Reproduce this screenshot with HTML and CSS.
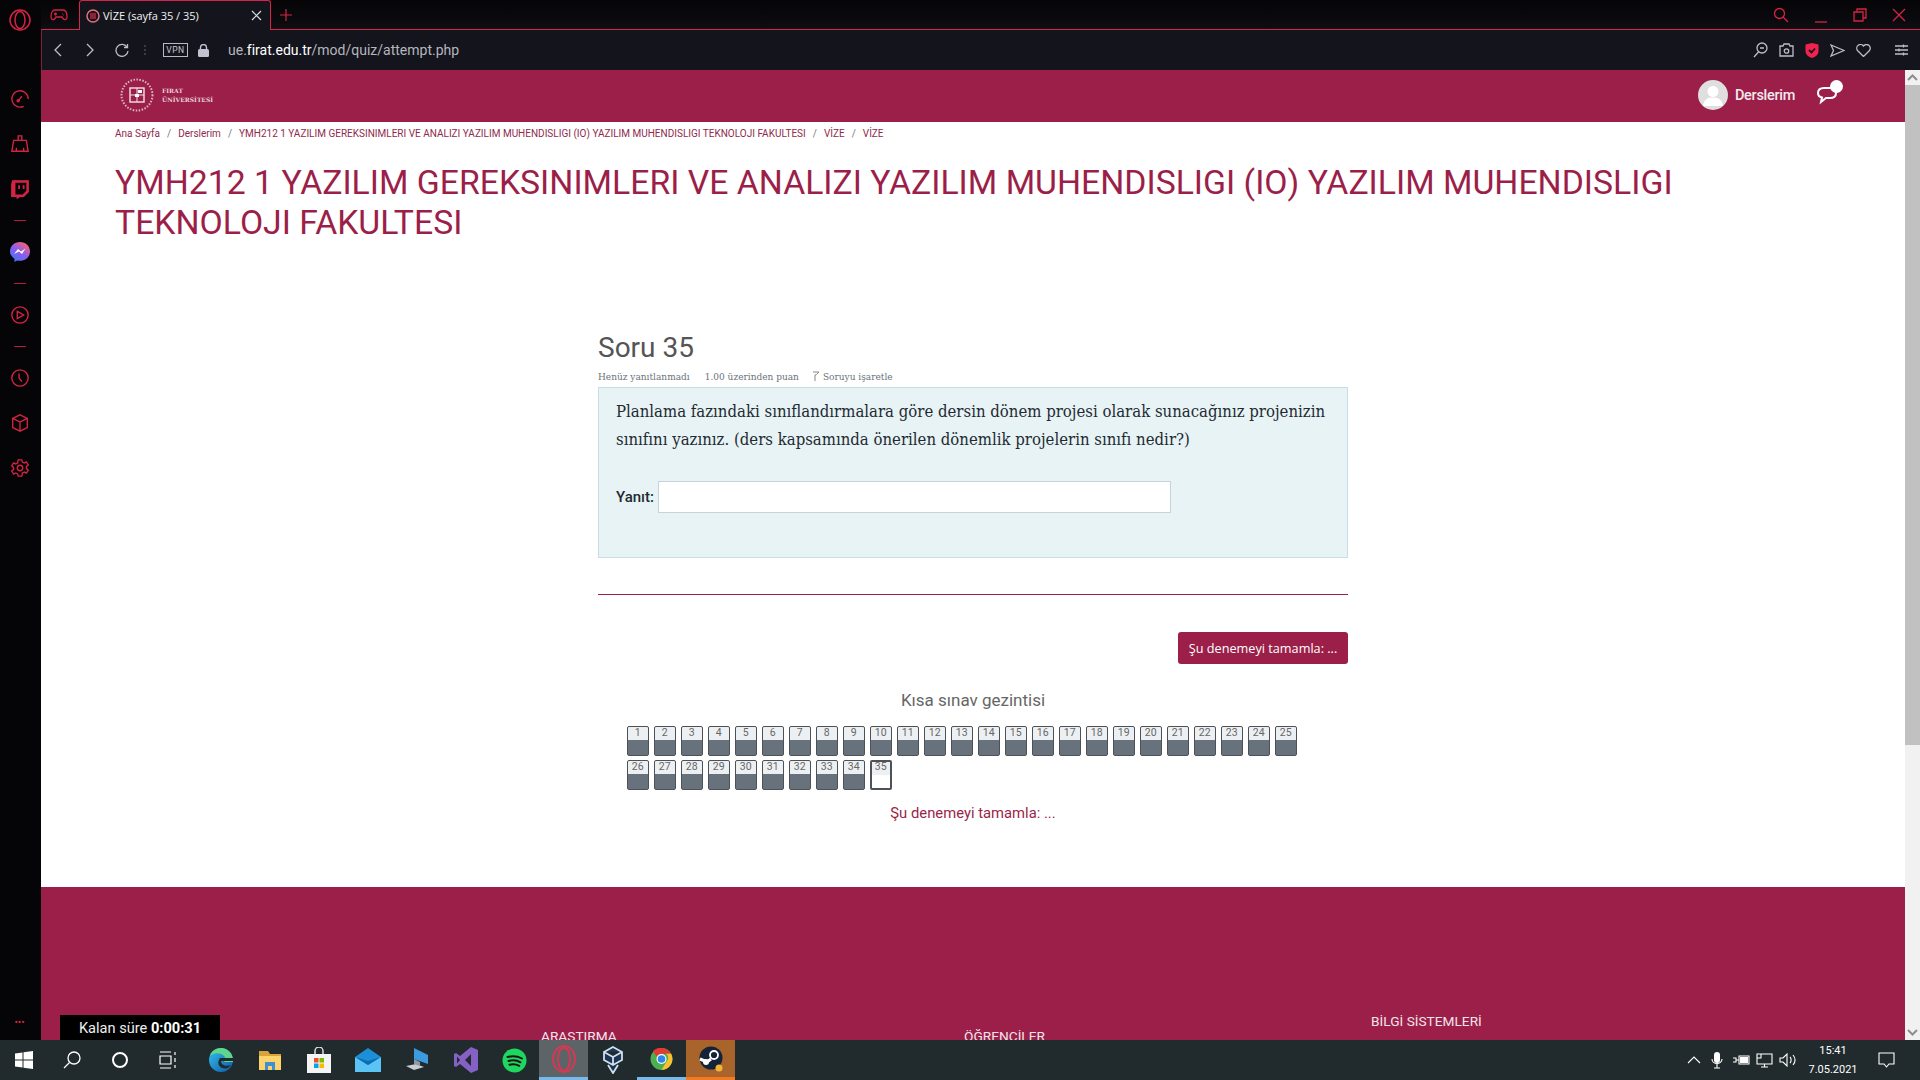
FILE: index.html
```html
<!DOCTYPE html>
<html lang="tr">
<head>
    <meta charset="UTF-8">
    <title>VİZE (sayfa 35 / 35)</title>
    <link rel="stylesheet" href="styles.css">
</head>
<body>
<div class="desktop">
    <div class="browser">
        <!-- Opera yan menu -->
        <aside class="sidebar">
            <svg class="side-logo" width="24" height="24" viewBox="0 0 24 24"><ellipse cx="12" cy="12" rx="10" ry="10"/><ellipse cx="12" cy="12" rx="5" ry="8.5"/></svg>
            <div class="side-icons">
                <svg width="20" height="20" viewBox="0 0 22 22"><path d="M15 19a9 9 0 1 1 5-8"/><path d="M9 13l4-5"/><circle cx="9" cy="13" r="1.2"/></svg>
                <svg class="gap" width="20" height="20" viewBox="0 0 22 22"><path d="M9 7V2h4v5M4 7h14l2 12H2zM7 19v-4M15 19v-4"/></svg>
                <svg class="gap" width="20" height="20" viewBox="0 0 22 22"><path class="solid" d="M3 2h17v12l-5 5h-4l-3 2v-2H2V6z"/><path class="inner" d="M6 4h12v9l-4 4H6z"/><path class="cut" d="M10 7v4M15 7v4"/></svg>
                <span class="side-line"></span>
                <svg class="messenger" width="20" height="20" viewBox="0 0 20 20"><defs><linearGradient id="msg" x1="0" y1="1" x2="0.7" y2="0"><stop offset="0" stop-color="#2f7df6"/><stop offset="0.55" stop-color="#8a5cf0"/><stop offset="1" stop-color="#f2627a"/></linearGradient></defs><path fill="url(#msg)" d="M10 0c5.600 0 10 4 10 9.400s-4.400 9.400-10 9.400c-1 0-2-.1-2.900-.4L4.500 20v-3.300C1.800 15 0 12.400 0 9.400 0 4 4.400 0 10 0z"/><path fill="#fff" d="M4 12l4-5 3 2.400L15.500 6.500 12 12 9 9.500z"/></svg>
                <span class="side-line"></span>
                <svg width="20" height="20" viewBox="0 0 22 22"><circle cx="11" cy="11" r="9"/><path d="M8 7l7 4-7 4z"/></svg>
                <span class="side-line"></span>
                <svg width="20" height="20" viewBox="0 0 22 22"><circle cx="11" cy="11" r="9"/><path d="M10 6v5l3 4"/></svg>
                <svg class="gap" width="20" height="20" viewBox="0 0 22 22"><path d="M11 2l8 4v10l-8 4-8-4V6zM3 6l8 4 8-4M11 10v10"/></svg>
                <svg class="gap" width="20" height="20" viewBox="0 0 22 22"><circle cx="11" cy="11" r="3"/><path d="M9 2h4l.6 2.500 2.200 1 2.300-1.200 2 3.400-2 1.600v2.400l2 1.600-2 3.400-2.300-1.200-2.200 1L13 20H9l-.6-2.500-2.200-1-2.300 1.200-2-3.400 2-1.600V10.300l-2-1.600 2-3.400 2.300 1.200 2.200-1z"/></svg>
            </div>
            <div class="side-more">&bull;&bull;&bull;</div>
        </aside>

        <div class="window">
            <div class="tabstrip">
                <svg class="tab-game" width="18" height="12" viewBox="0 0 18 12"><path d="M5 1h8c2.500 0 4 3 4 7 0 3-2.500 3.500-4 1.500L12 8H6L5 9.500C3.500 11.500 1 11 1 8c0-4 1.500-7 4-7z"/><path d="M4 5h3M5.500 3.500v3M12 4.500h.5M13.500 6h.5"/></svg>
                <div class="tab">
                    <svg width="14" height="14" viewBox="0 0 14 14"><circle cx="7" cy="7" r="6" fill="none" stroke="#e5707e" stroke-width="1.500"/><rect x="4" y="4" width="6" height="6" fill="#8d2238"/></svg>
                    <span class="tab-title">VİZE (sayfa 35 / 35)</span>
                    <svg width="11" height="11" viewBox="0 0 11 11"><path d="M1 1l9 9M10 1l-9 9" stroke="#ddd" stroke-width="1.200"/></svg>
                </div>
                <svg class="tab-plus" width="12" height="12" viewBox="0 0 12 12"><path d="M6 0v12M0 6h12"/></svg>
                <div class="win-buttons">
                    <svg width="16" height="16" viewBox="0 0 16 16"><circle cx="6.500" cy="6.500" r="5"/><path d="M10 10l5 5"/></svg>
                    <svg class="win-min" width="14" height="16" viewBox="0 0 14 16"><path d="M1 15h12"/></svg>
                    <svg width="14" height="14" viewBox="0 0 14 14"><path d="M1 4h9v9H1zM4 4V1h9v9h-3"/></svg>
                    <svg width="14" height="14" viewBox="0 0 14 14"><path d="M1 1l12 12M13 1L1 13"/></svg>
                </div>
            </div>

            <div class="toolbar">
                <svg width="10" height="14" viewBox="0 0 10 14"><path d="M8 1L2 7l6 6"/></svg>
                <svg class="nav-next" width="10" height="14" viewBox="0 0 10 14"><path d="M2 1l6 6-6 6"/></svg>
                <svg class="nav-reload" width="14" height="14" viewBox="0 0 14 14"><path d="M12 4a6 6 0 1 0 1 4M12.500 1v3.500H9"/></svg>
                <span class="tool-dots"></span>
                <span class="vpn">VPN</span>
                <svg class="lock" width="11" height="13" viewBox="0 0 11 13"><rect x="0" y="5" width="11" height="8" rx="1.500" fill="#c3c0d2"/><path d="M2.500 5V3.500a3 3 0 0 1 6 0V5" fill="none" stroke="#c3c0d2" stroke-width="1.400"/></svg>
                <span class="url">ue.<b>firat.edu.tr</b>/mod/quiz/attempt.php</span>
                <div class="tool-right">
                    <svg width="15" height="16" viewBox="0 0 15 16"><circle cx="9" cy="6" r="5"/><path d="M5.500 10L1 15M7 6h4"/></svg>
                    <svg width="15" height="14" viewBox="0 0 15 14"><path d="M1 3h3l1-2h5l1 2h3v10H1z"/><circle cx="7.500" cy="8" r="2.200"/></svg>
                    <svg width="14" height="15" viewBox="0 0 14 15"><path fill="#f0224e" stroke="none" d="M7 0l6.500 1.500V8c0 3.500-3 6-6.500 7-3.500-1-6.500-3.500-6.500-7V1.500z"/><path d="M4 7l2.500 2.500L10 5.500" stroke="#15161e" stroke-width="1.800"/></svg>
                    <svg width="15" height="13" viewBox="0 0 15 13"><path d="M1 1l13 5.500L1 12l2.500-5.500z"/></svg>
                    <svg width="15" height="13" viewBox="0 0 15 13"><path d="M7.500 12.500L1.500 6.500a3.500 3.500 0 0 1 6-4.500 3.500 3.500 0 0 1 6 4.500z"/></svg>
                    <svg class="tool-menu" width="13" height="12" viewBox="0 0 13 12"><path d="M0 2h13M0 6h13M0 10h13M8.500 0.500v3M4 4.500v3M8.500 8.500v3"/></svg>
                </div>
            </div>

            <div class="viewport">
                <div class="page">
                    <header class="navbar">
                        <div class="brand">
                            <svg width="34" height="34" viewBox="0 0 34 34"><circle cx="17" cy="17" r="15.500" fill="none" stroke="#d9b8c5" stroke-width="2" stroke-dasharray="1.500 1.500"/><rect x="10" y="10" width="14" height="14" fill="none" stroke="#f1e3e9" stroke-width="1.400"/><path d="M17 10v14M10 17h14" stroke="#f1e3e9"/><rect x="18" y="12" width="4" height="3" fill="#fff"/><rect x="15" y="16" width="4" height="3" fill="#fff"/></svg>
                            <div class="brand-name">FIRAT<br>ÜNİVERSİTESİ</div>
                        </div>
                        <div class="user-menu">
                            <div class="avatar"><svg width="30" height="30" viewBox="0 0 30 30"><circle cx="15" cy="11.500" r="5.500" fill="#fff"/><path d="M5 26c1-7 5-8.500 10-8.500S24 19 25 26z" fill="#fff"/></svg></div>
                            <span class="user-link">Derslerim</span>
                            <div class="chat">
                                <svg width="24" height="20" viewBox="0 0 24 20"><path d="M8 3h6c4 0 6 2 6 5s-2 5-6 5h-4l-5 4 1-4.500C3 12 2 10 2 8c0-3 2-5 6-5z" fill="none" stroke="#fff" stroke-width="2"/></svg>
                                <span class="chat-dot"></span>
                            </div>
                        </div>
                    </header>

                    <nav class="breadcrumb">
                        <a>Ana Sayfa</a><i>/</i><a>Derslerim</a><i>/</i><a>YMH212 1 YAZILIM GEREKSINIMLERI VE ANALIZI YAZILIM MUHENDISLIGI (IO) YAZILIM MUHENDISLIGI TEKNOLOJI FAKULTESI</a><i>/</i><a>VİZE</a><i>/</i><a>VİZE</a>
                    </nav>

                    <h1 class="course-title">YMH212 1 YAZILIM GEREKSINIMLERI VE ANALIZI YAZILIM MUHENDISLIGI (IO) YAZILIM MUHENDISLIGI TEKNOLOJI FAKULTESI</h1>

                    <main class="quiz">
                        <h2 class="question-no">Soru 35</h2>
                        <div class="question-meta">
                            <span>Henüz yanıtlanmadı</span>
                            <span>1.00 üzerinden puan</span>
                            <span class="flag"><svg width="8" height="10" viewBox="0 0 8 10"><path d="M1 1h6L4.500 3.500 3 4v6" fill="none" stroke="#888"/></svg>Soruyu işaretle</span>
                        </div>
                        <div class="question-box">
                            <p>Planlama fazındaki sınıflandırmalara göre dersin dönem projesi olarak sunacağınız projenizin sınıfını yazınız. (ders kapsamında önerilen dönemlik projelerin sınıfı nedir?)</p>
                            <div class="answer">
                                <label>Yanıt:</label>
                                <input type="text">
                            </div>
                        </div>
                        <hr class="divider">
                        <div class="submit-row"><button>Şu denemeyi tamamla: ...</button></div>
                        <h3 class="nav-title">Kısa sınav gezintisi</h3>
                        <div class="quiz-nav" id="quizNav"></div>
                        <a class="finish-link">Şu denemeyi tamamla: ...</a>
                    </main>

                    <footer class="site-footer">
                        <div class="foot-col foot-a">ARASTIRMA</div>
                        <div class="foot-col foot-b">ÖĞRENCİLER</div>
                        <div class="foot-col foot-c">BİLGİ SİSTEMLERİ</div>
                    </footer>
                </div>
                <div class="scrollbar">
                    <div class="scroll-btn"><svg width="11" height="7" viewBox="0 0 11 7"><path d="M1 6l4.500-4.500L10 6"/></svg></div>
                    <div class="scroll-track"><div class="scroll-thumb"></div></div>
                    <div class="scroll-btn"><svg width="11" height="7" viewBox="0 0 11 7"><path d="M1 1l4.500 4.500L10 1"/></svg></div>
                </div>
                <div class="timer">Kalan süre <b>0:00:31</b></div>
            </div>
        </div>
    </div>

    <!-- Windows gorev cubugu -->
    <div class="taskbar">
        <div class="task-item sys"><svg width="18" height="18" viewBox="0 0 18 18"><path fill="#fff" d="M0 2.500l7.500-1v7H0zM8.500 1.300L18 0v8.500H8.500zM0 9.500h7.500v7l-7.500-1zM8.500 9.500H18V18l-9.500-1.300z"/></svg></div>
        <div class="task-item sys"><svg width="18" height="18" viewBox="0 0 18 18"><circle cx="11" cy="7" r="6" fill="none" stroke="#fff" stroke-width="1.300"/><path d="M6.500 11.500L1 17" stroke="#fff" stroke-width="1.300"/></svg></div>
        <div class="task-item sys"><svg width="18" height="18" viewBox="0 0 18 18"><circle cx="9" cy="9" r="7" fill="none" stroke="#fff" stroke-width="2"/></svg></div>
        <div class="task-item sys task-gap"><svg width="18" height="18" viewBox="0 0 18 18"><path d="M1 1h11M1 17h11M1 5h11v8H1zM16 1v3M16 7v4M16 14v3" fill="none" stroke="#fff" stroke-width="1.200"/></svg></div>

        <div class="task-item"><svg width="26" height="26" viewBox="0 0 26 26"><defs><linearGradient id="edge" x1="0" y1="0" x2="1" y2="1"><stop offset="0" stop-color="#35c1f1"/><stop offset="1" stop-color="#0c59a4"/></linearGradient></defs><circle cx="13" cy="13" r="12" fill="url(#edge)"/><path fill="#5fd68a" d="M25 13c0-6-5-12-12-12C8 1 3 4 2 9c3-3 10-4 14 0 2 2 1 5 0 6h9z"/><path fill="#212a2d" d="M12 11h13v3H13c0 4 5 6 10 4l-3 3c-6 2-13-3-8-10z"/></svg></div>
        <div class="task-item"><svg width="24" height="22" viewBox="0 0 24 22"><path fill="#d9a33a" d="M1 2h9l2 3h11v16H1z"/><path fill="#fdd36b" d="M1 7h22v14H1z"/><path fill="#3f8fd6" d="M7 13h10v8h-3v-4h-4v4H7z"/></svg></div>
        <div class="task-item"><svg width="24" height="26" viewBox="0 0 24 26"><path fill="none" stroke="#ddd" stroke-width="1.500" d="M8 8V4a4 4 0 0 1 8 0v4"/><rect y="7" width="24" height="19" fill="#f4f4f4"/><rect x="7" y="11" width="4.500" height="4.500" fill="#f25022"/><rect x="12.500" y="11" width="4.500" height="4.500" fill="#7fba00"/><rect x="7" y="16.500" width="4.500" height="4.500" fill="#00a4ef"/><rect x="12.500" y="16.500" width="4.500" height="4.500" fill="#ffb900"/></svg></div>
        <div class="task-item"><svg width="26" height="24" viewBox="0 0 26 24"><path fill="#1d8fd8" d="M0 9L13 0l13 9v15H0z"/><path fill="#5cc3f5" d="M0 9l13 8 13-8v15H0z"/><path fill="#0f6cb3" d="M0 9l13 8 13-8-13 4z"/></svg></div>
        <div class="task-item"><svg width="24" height="26" viewBox="0 0 24 26"><path fill="#3c9be0" d="M9 1l14 7v9L9 12z"/><path fill="#c9ccd0" d="M1 19l10-2 8 3-10 3z"/><path fill="#8b9aa5" d="M9 12l6 3v4l-6-2z"/></svg></div>
        <div class="task-item"><svg width="24" height="26" viewBox="0 0 24 26"><path fill="#8661c5" d="M17 0l7 3v20l-7 3-11-9-4 3-2-1V7l2-1 4 3zM3 9.500v7l3-3.500zM17 7l-6 6 6 6z"/></svg></div>
        <div class="task-item"><svg width="25" height="25" viewBox="0 0 25 25"><circle cx="12.500" cy="12.500" r="12" fill="#1ed760"/><path d="M5.500 9c5-1.500 10-1 14.500 1.500M6.500 13c4-1 8.500-.8 12 1.300M7.500 16.800c3.500-.8 6.800-.5 9.700 1" fill="none" stroke="#191414" stroke-width="2" stroke-linecap="round"/></svg></div>
        <div class="task-item is-opera"><svg width="24" height="28" viewBox="0 0 24 28"><ellipse cx="12" cy="14" rx="11" ry="13" fill="none" stroke="#d03a52" stroke-width="2"/><ellipse cx="12" cy="14" rx="6" ry="11.500" fill="none" stroke="#d03a52" stroke-width="2"/></svg></div>
        <div class="task-item"><svg width="22" height="28" viewBox="0 0 22 28"><path d="M11 1l9 5v8l-9 5-9-5V6zM2 6l9 5 9-5M11 11v8M6 19l5 8 5-8" fill="#1d3552" stroke="#cfe0ee" stroke-width="1.800"/></svg></div>
        <div class="task-item is-chrome"><svg width="23" height="26" viewBox="0 0 24 24"><circle cx="12" cy="12" r="11.500" fill="#4caf50"/><path fill="#e53935" d="M12 .5a11.500 11.500 0 0 1 10 6H12a5.500 5.500 0 0 0-5 3L3 3.800A11.500 11.500 0 0 1 12 .5z"/><path fill="#fbc02d" d="M22 6.500A11.500 11.500 0 0 1 12 23.500l5-8.500a5.500 5.500 0 0 0 0-8.500z"/><circle cx="12" cy="12" r="5.200" fill="#fff"/><circle cx="12" cy="12" r="4" fill="#2f86ea"/></svg></div>
        <div class="task-item is-steam"><svg width="24" height="26" viewBox="0 0 24 26"><circle cx="12" cy="12" r="11.500" fill="#152338"/><circle cx="15" cy="9" r="4" fill="none" stroke="#fff" stroke-width="1.800"/><path d="M1 13l7 3 4-3" fill="none" stroke="#fff" stroke-width="3"/><circle cx="7" cy="16" r="3" fill="#fff"/><circle cx="20" cy="22" r="3.500" fill="#f5b335"/></svg></div>

        <div class="tray">
            <svg width="14" height="8" viewBox="0 0 14 8"><path d="M1 7l6-6 6 6"/></svg>
            <svg class="tray-wide" width="12" height="17" viewBox="0 0 12 17"><rect x="3" y="0" width="6" height="11" rx="3" fill="#fff" stroke="none"/><path d="M1 7c0 6 10 6 10 0M6 12v4M3 16h6"/></svg>
            <svg class="tray-wide" width="17" height="12" viewBox="0 0 17 12"><path d="M6 2h10v8H6zM0 4h3v4H0M3 6h3"/><rect x="7" y="3" width="8" height="6" fill="#fff" stroke="none"/></svg>
            <svg width="17" height="15" viewBox="0 0 17 15"><path d="M1 1h15v10H1zM8.500 11v3M5 14h7M1 1h4v4H1z"/></svg>
            <svg width="17" height="14" viewBox="0 0 17 14"><path d="M1 5h3l4-4v12L4 9H1zM11 4c1.500 1.500 1.500 4.500 0 6M14 2c2.500 3 2.500 7 0 10"/></svg>
            <div class="clock">15:41<br>7.05.2021</div>
            <svg class="tray-note" width="17" height="16" viewBox="0 0 17 16"><path d="M1 1h15v11h-5l-2.500 3L6 12H1z"/></svg>
        </div>
    </div>
</div>

<script>
    // 35 soru dugmesi
    var nav = document.getElementById("quizNav");
    for (var i = 1; i <= 35; i++) {
        var b = document.createElement("div");
        b.className = i === 35 ? "qn current" : "qn";
        b.innerHTML = "<span>" + i + "</span>";
        nav.appendChild(b);
    }
</script>
</body>
</html>
```

FILE: styles.css
```css
* {
    box-sizing: border-box;
}

html, body {
    margin: 0;
    height: 100%;
    overflow: hidden;
}

body {
    font-family: Roboto, "Liberation Sans", sans-serif;
    background: #000;
}

.desktop {
    display: flex;
    flex-direction: column;
    height: 1080px;
}

.browser {
    display: flex;
    height: 1040px;
}

/* Yan menu */
.sidebar {
    width: 41px;
    flex: none;
    background: #050507;
    display: flex;
    flex-direction: column;
    align-items: center;
    padding-top: 8px;
}

.sidebar svg {
    fill: none;
    stroke: #d62344;
    stroke-width: 1.500;
}

.side-logo {
    margin-left: -2px;
}

.side-icons {
    display: flex;
    flex-direction: column;
    align-items: center;
    margin: 57px 2px 0 0;
}

.side-icons .gap {
    margin-top: 25px;
}

.side-icons .solid {
    fill: #d62344;
}

.side-icons .inner {
    fill: #050507;
    stroke: none;
}

.side-icons .cut {
    stroke: #d62344;
    stroke-width: 2;
}

.side-icons .messenger {
    stroke: none;
}

.side-line {
    width: 12px;
    height: 1px;
    background: #b3203c;
    margin: 21px 0;
}

.side-more {
    margin: auto 2px 12px 0;
    color: #d62344;
    font-size: 10px;
    line-height: 10px;
}

.window {
    flex: 1;
    min-width: 0;
    display: flex;
    flex-direction: column;
}

/* Sekmeler */
.tabstrip {
    height: 30px;
    flex: none;
    background: linear-gradient(#050507, #0d0d12);
    border-bottom: 1px solid #d8234a;
    display: flex;
    align-items: center;
    padding-left: 9px;
}

.tabstrip svg {
    flex: none;
}

.tab-game {
    fill: none;
    stroke: #d62344;
    stroke-width: 1.300;
}

.tab {
    width: 192px;
    height: 31px;
    margin: 0 0 -1px 11px;
    padding: 0 8px 0 6px;
    background: #14151c;
    border: 1px solid #d8234a;
    border-bottom: none;
    border-radius: 3px 3px 0 0;
    display: flex;
    align-items: center;
    color: #f2f2f2;
    font-family: "Open Sans", sans-serif;
    font-size: 11px;
}

.tab-title {
    margin-left: 3px;
    flex: 1;
}

.tab-plus {
    margin-left: 9px;
    stroke: #d62344;
    stroke-width: 1.200;
}

.win-buttons {
    margin-left: auto;
    display: flex;
    align-items: center;
    padding-right: 14px;
}

.win-buttons svg {
    fill: none;
    stroke: #d62344;
    stroke-width: 1.300;
    margin-left: 25px;
}

/* Adres cubugu */
.toolbar {
    height: 40px;
    flex: none;
    background: #14151c;
    border-left: 1px solid #8a1c34;
    display: flex;
    align-items: center;
    padding: 0 12px 0 11px;
    color: #c7c7cf;
}

.toolbar svg {
    fill: none;
    stroke: #bdbdc6;
    stroke-width: 1.300;
    flex: none;
}

.nav-next {
    margin-left: 22px;
}

.nav-reload {
    margin-left: 20px;
}

.tool-dots {
    margin-left: 15px;
    width: 2px;
    height: 10px;
    border-left: 2px dotted #3a3b44;
}

.vpn {
    margin-left: 17px;
    width: 25px;
    border: 1px solid #b9b9c2;
    font-size: 8.500px;
    line-height: 12px;
    text-align: center;
    letter-spacing: 0.500px;
}

.toolbar .lock {
    margin-left: 10px;
    stroke: none;
}

.url {
    margin-left: 19px;
    font-size: 14px;
    color: #b5b5bf;
}

.url b {
    color: #fff;
    font-weight: 400;
}

.tool-right {
    margin-left: auto;
    display: flex;
    align-items: center;
    gap: 11px;
}

.tool-menu {
    margin-left: 13px;
}

.viewport {
    flex: 1;
    min-height: 0;
    display: flex;
    position: relative;
}

.page {
    flex: 1;
    min-width: 0;
    background: #fff;
    overflow: hidden;
    display: flex;
    flex-direction: column;
}

/* Site ust bandi */
.navbar {
    height: 52px;
    flex: none;
    background: #9b1f49;
    display: flex;
    align-items: center;
    padding: 0 65px 2px 79px;
    color: #fff;
}

.brand {
    display: flex;
    align-items: center;
    gap: 8px;
}

.brand-name {
    font-family: "DejaVu Serif", serif;
    font-weight: 700;
    font-size: 6px;
    line-height: 9px;
    color: #e7d3db;
}

.user-menu {
    margin-left: auto;
    display: flex;
    align-items: center;
}

.avatar {
    width: 30px;
    height: 30px;
    border-radius: 50%;
    background: #dfdfdf;
    overflow: hidden;
}

.user-link {
    margin-left: 7px;
    font-size: 14.500px;
    font-weight: 500;
    letter-spacing: -0.300px;
    color: #f5e9ee;
}

.chat {
    position: relative;
    margin-left: 21px;
    width: 24px;
    height: 20px;
}

.chat-dot {
    position: absolute;
    right: -3px;
    top: -5px;
    width: 13px;
    height: 13px;
    border-radius: 50%;
    background: #fff;
}

.breadcrumb {
    padding: 6px 0 0 74px;
    height: 23px;
    font-size: 10px;
    line-height: 12px;
    color: #8f2a4d;
    white-space: nowrap;
}

.breadcrumb i {
    font-style: normal;
    margin: 0 7px;
    color: #777;
}

.course-title {
    margin: 18px 0 0;
    padding: 0 100px 0 74px;
    font-size: 33.750px;
    line-height: 40px;
    font-weight: 400;
    color: #9b1f49;
}

/* Soru alani */
.quiz {
    width: 750px;
    margin: 89px 0 0 557px;
    flex: none;
}

.question-no {
    margin: 0;
    font-size: 28px;
    line-height: 32px;
    font-weight: 400;
    color: #555;
}

.question-meta {
    margin-top: 6px;
    display: flex;
    gap: 15px;
    height: 14px;
    font-family: "DejaVu Serif", serif;
    font-size: 9px;
    line-height: 14px;
    color: #6a737b;
}

.flag {
    margin-left: -2px;
}

.flag svg {
    margin-right: 3px;
    vertical-align: -1px;
}

.question-box {
    margin-top: 3px;
    height: 171px;
    background: #e7f3f5;
    border: 1px solid #c6dfe6;
    padding: 10px 17px 0;
}

.question-box p {
    margin: 0;
    font-family: "DejaVu Serif Condensed", "DejaVu Serif", serif;
    font-stretch: condensed;
    font-size: 16.600px;
    line-height: 28px;
    color: #1f2a33;
}

.answer {
    margin-top: 27px;
    display: flex;
    align-items: center;
    gap: 4px;
}

.answer label {
    font-size: 15px;
    font-weight: 500;
    color: #1f2a33;
}

.answer input {
    width: 513px;
    height: 32px;
    border: 1px solid #c6d3d8;
    background: #fff;
}

.divider {
    margin: 36px 0 0;
    border: none;
    border-top: 1px solid #9b1f49;
}

.submit-row {
    margin-top: 37px;
    display: flex;
    justify-content: flex-end;
}

.submit-row button {
    width: 170px;
    height: 32px;
    background: #9b1f49;
    border: none;
    border-radius: 3px;
    color: #fff;
    font-family: "Open Sans", sans-serif;
    font-size: 12.700px;
    padding: 0;
}

.nav-title {
    margin: 26px 0 0;
    text-align: center;
    font-size: 17px;
    line-height: 20px;
    font-weight: 400;
    color: #666;
}

.quiz-nav {
    margin: 16px 0 0 29px;
    width: 680px;
    display: flex;
    flex-wrap: wrap;
    gap: 4px 5.500px;
}

.qn {
    width: 21.500px;
    height: 30px;
    border: 1px solid #4c5258;
    border-radius: 2px;
    background: linear-gradient(#edf0f2 13px, #68727c 13px);
    font-size: 10.500px;
    line-height: 12px;
    color: #666;
    text-align: center;
}

.qn.current {
    border: 2px solid #4c5258;
    line-height: 10px;
    background: linear-gradient(#edf0f2 13px, #fff 13px);
}

.finish-link {
    display: block;
    margin-top: 14px;
    text-align: center;
    font-size: 14.800px;
    line-height: 18px;
    color: #9b1f49;
}

/* Alt bilgi */
.site-footer {
    margin-top: 65px;
    flex: 1;
    background: #9b1f49;
    position: relative;
    color: #f4e4ea;
    font-size: 13.700px;
}

.foot-col {
    position: absolute;
}

.foot-a {
    left: 500px;
    top: 141px;
}

.foot-b {
    left: 923px;
    top: 141px;
}

.foot-c {
    left: 1330px;
    top: 126px;
}

.scrollbar {
    width: 15px;
    flex: none;
    background: #f1f1f1;
    display: flex;
    flex-direction: column;
}

.scroll-btn {
    height: 15px;
    display: flex;
    align-items: center;
    justify-content: center;
}

.scroll-btn svg {
    fill: none;
    stroke: #8d8d8d;
    stroke-width: 2;
}

.scroll-track {
    flex: 1;
}

.scroll-thumb {
    height: 660px;
    background: #c1c1c1;
}

.timer {
    position: absolute;
    left: 19px;
    bottom: 0;
    width: 160px;
    height: 25px;
    background: #000;
    color: #eee;
    font-size: 14.600px;
    line-height: 26px;
    text-align: center;
}

.timer b {
    color: #fff;
}

/* Gorev cubugu */
.taskbar {
    height: 40px;
    flex: none;
    background: #212a2d;
    display: flex;
    align-items: stretch;
}

.task-item {
    width: 49px;
    display: flex;
    align-items: center;
    justify-content: center;
}

.task-item.sys {
    width: 48px;
}

.task-gap {
    margin-right: 4px;
}

.is-opera {
    background: #5d6468;
    border-bottom: 3px solid #76b9ed;
}

.is-chrome {
    border-bottom: 3px solid #76b9ed;
}

.is-steam {
    background: #a8642a;
    border-bottom: 3px solid #f47a20;
}

.tray {
    margin-left: auto;
    display: flex;
    align-items: center;
    gap: 6px;
    padding-right: 25px;
}

.tray svg {
    fill: none;
    stroke: #fff;
    stroke-width: 1.100;
    flex: none;
}

.tray .tray-wide {
    margin-left: 4px;
}

.clock {
    width: 62px;
    text-align: center;
    color: #fff;
    font-size: 11px;
    line-height: 19px;
}

.tray .tray-note {
    margin-left: 8px;
}
```
